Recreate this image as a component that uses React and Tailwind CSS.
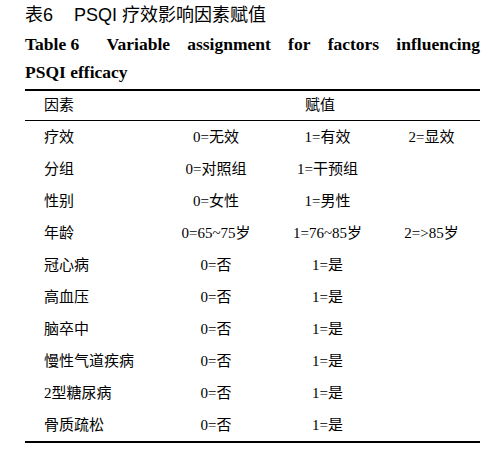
import React from "react";

const rows = [
  ["疗效", "0=无效", "1=有效", "2=显效"],
  ["分组", "0=对照组", "1=干预组", ""],
  ["性别", "0=女性", "1=男性", ""],
  ["年龄", "0=65~75岁", "1=76~85岁", "2=>85岁"],
  ["冠心病", "0=否", "1=是", ""],
  ["高血压", "0=否", "1=是", ""],
  ["脑卒中", "0=否", "1=是", ""],
  ["慢性气道疾病", "0=否", "1=是", ""],
  ["2型糖尿病", "0=否", "1=是", ""],
  ["骨质疏松", "0=否", "1=是", ""],
];

const serif = "font-['Liberation_Serif','Noto_Sans_CJK_SC',serif]";

export default function App() {
  return (
    <div className="w-[501px] h-[450px] bg-white text-black px-[25px] overflow-hidden">
      {/* caption */}
      <div className="h-[30px] flex items-center text-[18px] font-['Liberation_Sans','Noto_Sans_CJK_SC',sans-serif]">
        <span>表6</span>
        <span className="ml-[21px]">PSQI 疗效影响因素赋值</span>
      </div>
      <div className={`${serif} font-bold text-[17.5px] leading-[28px] w-[455px]`}>
        <div className="flex justify-between">
          <span className="mr-[10px]">Table 6</span>
          <span>Variable</span>
          <span>assignment</span>
          <span>for</span>
          <span>factors</span>
          <span>influencing</span>
        </div>
        <div>PSQI efficacy</div>
      </div>

      {/* table */}
      <div className={`${serif} text-[15px] w-[455px] mt-[3px] border-t-2 border-b-2 border-black`}>
        <div className="grid grid-cols-[135px_320px] h-[30px] items-center border-b border-black">
          <span className="pl-[19px]">因素</span>
          <span className="text-center">赋值</span>
        </div>
        {rows.map((r) => (
          <div key={r[0]} className="grid grid-cols-[135px_112px_111px_97px] h-[32px] items-center">
            <span className="pl-[19px]">{r[0]}</span>
            <span className="text-center">{r[1]}</span>
            <span className="text-center">{r[2]}</span>
            <span className="text-center">{r[3]}</span>
          </div>
        ))}
      </div>
    </div>
  );
}
